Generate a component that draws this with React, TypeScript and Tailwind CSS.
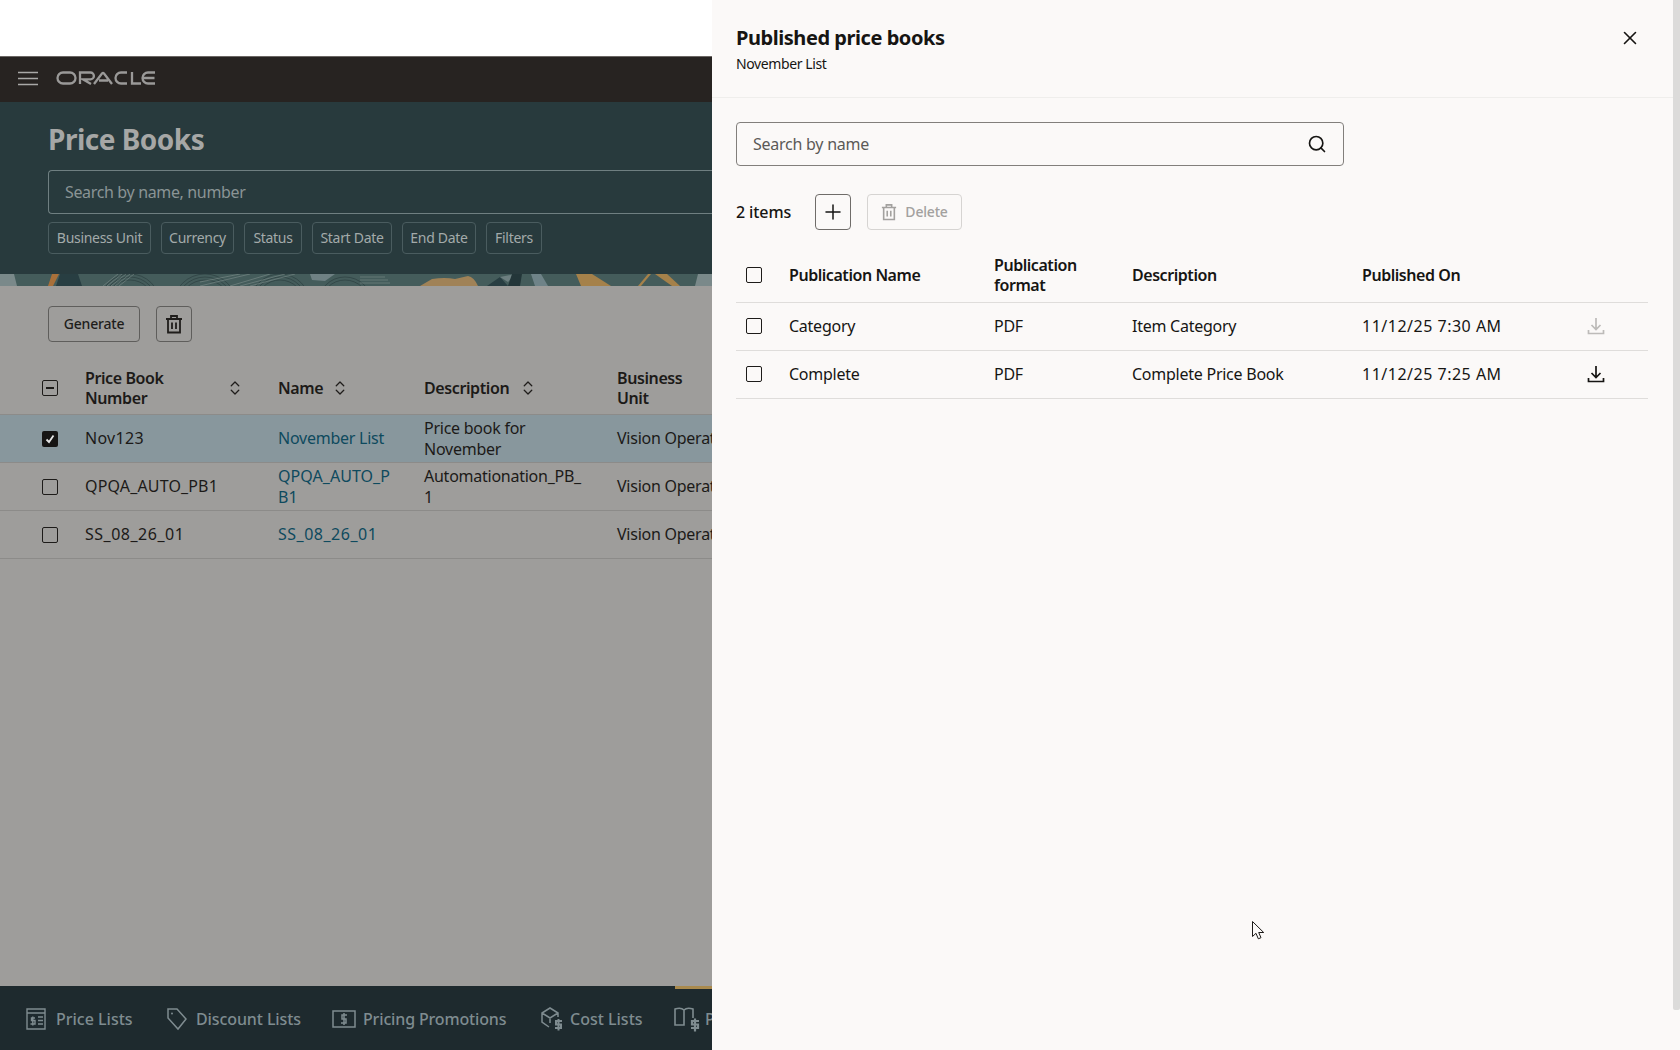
import { ChevronsUpDown, Plus, Search, X } from 'lucide-react';

const filters = [
  { label: 'Business Unit', width: 'w-[103px]' },
  { label: 'Currency', width: 'w-[73px]' },
  { label: 'Status', width: 'w-[58px]' },
  { label: 'Start Date', width: 'w-[80px]' },
  { label: 'End Date', width: 'w-[74px]' },
  { label: 'Filters', width: 'w-[56px]' },
];

const publications = [
  { name: 'Category', format: 'PDF', description: 'Item Category', published: '11/12/25 7:30 AM', enabled: false },
  { name: 'Complete', format: 'PDF', description: 'Complete Price Book', published: '11/12/25 7:25 AM', enabled: true },
];

function TrashIcon({ className }: { className?: string }) {
  return (
    <svg viewBox="0 0 18 20" className={className} fill="none" stroke="currentColor" strokeWidth="1.8">
      <path d="M1 5h16M6 5V2h6v3M3 5v13.500h12V5M7 8.500v6.500M11 8.500v6.500" />
    </svg>
  );
}

function DownloadIcon({ className }: { className?: string }) {
  return (
    <svg viewBox="0 0 18 18" className={className} fill="none" stroke="currentColor" strokeWidth="1.7">
      <path d="M9 1v11M4.500 8 9 12.500 13.500 8M1.500 13v3.500h15V13" />
    </svg>
  );
}

function Checkbox({ className = 'border-[#1d1b19]' }: { className?: string }) {
  return <span className={`block h-4 w-4 rounded-[2px] border-[1.5px] ${className}`} />;
}

function SortIcon() {
  return <ChevronsUpDown className="h-[18px] w-[18px] text-[#1f1d1b]" strokeWidth={1.75} />;
}

function PatternStrip() {
  return (
    <svg viewBox="0 0 712 12" preserveAspectRatio="none" className="block h-3 w-full">
      <rect width="712" height="12" fill="#445c5b" />
      <g fill="none" stroke="#2c3f40" strokeWidth="0.7">
        <circle cx="130" cy="30" r="30" />
        <circle cx="130" cy="30" r="27" />
        <circle cx="130" cy="30" r="24" />
        <circle cx="205" cy="32" r="32" />
        <circle cx="205" cy="32" r="29" />
        <circle cx="205" cy="32" r="26" />
        <circle cx="280" cy="30" r="30" />
        <circle cx="280" cy="30" r="27" />
        <circle cx="280" cy="30" r="24" />
        <circle cx="345" cy="30" r="27" />
        <circle cx="345" cy="30" r="24" />
      </g>
      <g fill="none" stroke="#7d8d8c" strokeWidth="0.6">
        <path d="M103 12 118 0M107 12 122 0M111 12 126 0M115 12 130 0M119 12 134 0" />
        <path d="M200 8 240 0M200 12 250 0M230 12 270 0M240 12 285 0M250 12 295 0" />
        <path d="M360 3h25M360 6h28M360 9h30" />
      </g>
      <polygon points="0,0 14,0 17,12 0,12" fill="#7a898a" />
      <polygon points="52,0 59,0 53,12 48,12" fill="#a8703a" />
      <polygon points="60,0 78,0 82,12 56,12" fill="#283e42" />
      <polygon points="310,0 335,0 325,7 312,6" fill="#6f8184" />
      <path d="M420 12 432 5Q445 3 455 5L468 2Q474 3 478 12Z" fill="#a08257" />
      <polygon points="487,12 500,3 508,12" fill="#283e42" />
      <polygon points="500,3 515,0 508,8" fill="#6d7f80" />
      <polygon points="512,0 522,0 520,12 508,12" fill="#233639" />
      <polygon points="531,0 541,0 548,12 535,12" fill="#6f8388" />
      <polygon points="576,0 592,0 611,12 581,12" fill="#a5814a" />
      <polygon points="648,0 651,0 641,12 638,12" fill="#a5814a" />
      <polygon points="655,0 667,0 680,12 672,12" fill="#a5814a" />
      <polygon points="698,0 712,0 712,12 695,12" fill="#7a898a" />
    </svg>
  );
}

function PriceListIcon() {
  return (
    <svg viewBox="0 0 20 22" className="h-[22px] w-5" fill="none" stroke="currentColor" strokeWidth="1.4">
      <path d="M1 1h18v20H1zM1 5h18" />
      <path d="M12 9h5M12 12.500h5M12 16h5" />
      <path d="M9 10H5.500v2.500H9V16H4.500M6.800 8.500v9" />
    </svg>
  );
}

function TagIcon() {
  return (
    <svg viewBox="0 0 22 24" className="h-6 w-[22px] shrink-0" fill="none" stroke="currentColor" strokeWidth="1.5">
      <path d="M2 2h9l9 10-8 10-10-11z" />
      <circle cx="6" cy="6.500" r="1" fill="currentColor" stroke="none" />
    </svg>
  );
}

function PromotionIcon() {
  return (
    <svg viewBox="0 0 24 20" className="h-5 w-6 shrink-0" fill="none" stroke="currentColor" strokeWidth="1.5">
      <path d="M1 2h22v16H1z" />
      <path d="M15 6h-5v4h4v4H9M12 4v12" />
    </svg>
  );
}

function CostIcon() {
  return (
    <svg viewBox="0 0 24 26" className="h-[26px] w-6 shrink-0" fill="none" stroke="currentColor" strokeWidth="1.5">
      <path d="M19 11V7l-8-5-8 5v9l7 5M3 7l8 5 8-5M11 12v5" />
      <path d="M23 15h-6v3.500h5V22h-6M19.500 13v11.500" strokeWidth="2" />
    </svg>
  );
}

function BookIcon() {
  return (
    <svg viewBox="0 0 26 26" className="h-[26px] w-[26px] shrink-0" fill="none" stroke="currentColor" strokeWidth="1.6">
      <path d="M10 4C8 2 4 2 1 3v16h9V4zM10 4c2-2 6-2 9-1v9M10 4v15" />
      <path d="M25 15h-7v3.500h6V22h-7M21 12.500v13" strokeWidth="2.200" />
    </svg>
  );
}

function ArrowCursor() {
  return (
    <svg viewBox="0 0 13 20" className="absolute left-[1252px] top-[921px] h-5 w-[13px]" fill="#fbf9f8" stroke="#1c1a18" strokeWidth="1">
      <path d="M.5.5v15l3.500-3.200 2.300 5.500 2.700-1.100-2.300-5.200h5z" />
    </svg>
  );
}

function MainColumn() {
  return (
    <div className="flex w-[712px] shrink-0 flex-col overflow-hidden">
      <div className="h-14 shrink-0 bg-white" />
      <header className="flex h-[46px] shrink-0 items-center border-t border-[#6b6764] bg-[#272321] pb-[3px] pl-[18px]">
        <svg viewBox="0 0 20 15" className="h-[15px] w-5" stroke="#a9a8a7" strokeWidth="1.6">
          <path d="M0 1.500h20M0 7.500h20M0 13.500h20" />
        </svg>
        {/* the wordmark is a logo */}
        <svg viewBox="0 0 100 14" className="ml-[17px] h-[14px] w-[100px]" fill="none" stroke="#9a9998" strokeWidth="2.300">
          <path d="M8 1.500h7a5.500 5.500 0 0 1 0 11H8a5.500 5.500 0 0 1 0-11z" />
          <path d="M25 13V1.500h10.500a3.300 3.300 0 0 1 0 6.800H28l8 4.700" />
          <path d="M39 13 47 2.500q1-1.200 2 0L57 13M44 9.500h9" />
          <path d="M72 1.500h-6a5.500 5.500 0 0 0 0 11h6" />
          <path d="M77 1v11.500h9" />
          <path d="M100 1.500h-7a5.500 5.500 0 0 0 0 11h7M88.500 7h11" />
        </svg>
      </header>

      <section className="h-[172px] shrink-0 bg-[#283a3d] pl-12 pt-[19px]">
        <h1 className="text-[28px] leading-9 font-bold tracking-[-0.5px] text-[#a6a7a6]">Price Books</h1>
        <div className="mt-[13px] flex h-11 items-center rounded-l-[4px] border border-r-0 border-[#6f7f81] pl-4 text-base tracking-[-0.35px] text-[#8a9495]">
          Search by name, number
        </div>
        <div className="mt-2 flex gap-2.5">
          {filters.map((f) => (
            <span
              key={f.label}
              className={`flex h-8 items-center justify-center rounded-[4px] border border-[#4a5c5f] text-sm tracking-[-0.3px] text-[#a3aaaa] ${f.width}`}
            >
              {f.label}
            </span>
          ))}
        </div>
      </section>
      <PatternStrip />

      <main className="flex-1 bg-[#9e9d9b]">
        <div className="flex h-14 items-end gap-4 pl-12">
          <button className="h-9 w-[92px] rounded-[4px] border border-[#5f5e5c] text-sm font-medium tracking-[-0.2px] text-[#1f1d1b]">Generate</button>
          <button className="flex h-9 w-9 items-center justify-center rounded-[4px] border border-[#5f5e5c] text-[#1f1d1b]">
            <TrashIcon className="h-[20px] w-[18px]" />
          </button>
        </div>

        <div className="mt-2 grid h-[65px] grid-cols-[85px_193px_146px_193px_95px] items-center border-b border-[#8c8b89] pt-[11px] text-base leading-5 font-semibold tracking-[-0.4px] text-[#1c1a18]">
          <span className="flex justify-center pl-[14px]">
            <span className="flex h-4 w-4 items-center justify-center rounded-[2px] border-[1.5px] border-[#1d1b19]">
              <span className="h-[2px] w-2 bg-[#1d1b19]" />
            </span>
          </span>
          <span className="flex items-center">
            <span className="w-[141px]">Price Book<br />Number</span>
            <SortIcon />
          </span>
          <span className="flex items-center gap-2">Name <SortIcon /></span>
          <span className="flex items-center gap-2.5">Description <SortIcon /></span>
          <span>Business<br />Unit</span>
        </div>

        <PriceBookRow selected number={<span className="tracking-[0.3px]">Nov123</span>} name={<>November List</>} description={<>Price book for<br />November</>} />
        <PriceBookRow
          number={<span className="tracking-[0.15px]">QPQA_AUTO_PB1</span>}
          name={<span className="tracking-[0.05px]">QPQA_AUTO_P<br />B1</span>}
          description={<>Automationation_PB_<br />1</>}
        />
        <PriceBookRow
          number={<span className="tracking-[0.5px]">SS_08_26_01</span>}
          name={<span className="tracking-[0.5px]">SS_08_26_01</span>}
        />
      </main>

      <footer className="relative flex h-16 shrink-0 items-center bg-[#1e2a2e] pt-[1px] pl-[26px] text-base font-medium text-[#7f8c90]">
        <span className="absolute top-0 right-0 h-[3px] w-[37px] bg-[#a98a4e]" />
        <span className="flex w-[140px] shrink-0 items-center gap-[10px]"><PriceListIcon /><span>Price Lists</span></span>
        <span className="flex w-[166px] shrink-0 items-center gap-2"><TagIcon /><span className="tracking-[-0.1px]">Discount Lists</span></span>
        <span className="flex w-[207px] shrink-0 items-center gap-[7px]"><PromotionIcon /><span className="tracking-[-0.15px]">Pricing Promotions</span></span>
        <span className="flex w-[135px] shrink-0 items-center gap-[7px]"><CostIcon /><span>Cost Lists</span></span>
        <span className="flex shrink-0 items-center gap-[5px]"><BookIcon /><span>Pricing</span></span>
      </footer>
    </div>
  );
}

function PriceBookRow({
  selected,
  number,
  name,
  description,
}: {
  selected?: boolean;
  number: React.ReactNode;
  name: React.ReactNode;
  description?: React.ReactNode;
}) {
  return (
    <div
      className={`grid h-12 grid-cols-[85px_193px_146px_193px_95px] items-center border-b border-[#8c8b89] text-base leading-[21px] tracking-[-0.25px] text-[#1c1a18] ${
        selected ? 'bg-[#88979d]' : ''
      }`}
    >
      <span className="flex justify-center pl-[14px]">
        {selected ? (
          <span className="flex h-4 w-4 items-center justify-center rounded-[2px] bg-[#161514]">
            <svg viewBox="0 0 12 12" className="h-3 w-3" fill="none" stroke="#e5e5e5" strokeWidth="1.8">
              <path d="M2.500 6.500 5 9l4.500-6.500" />
            </svg>
          </span>
        ) : (
          <Checkbox />
        )}
      </span>
      <span>{number}</span>
      <span className="text-[#0e4a5e]">{name}</span>
      <span>{description}</span>
      <span className="whitespace-nowrap">Vision Operations</span>
    </div>
  );
}

function PublishedPanel() {
  return (
    <aside className="relative flex-1 bg-[#fbf9f8] text-[#161513]">
      <div className="flex h-[98px] items-start justify-between border-b border-[#efeeec] pt-[23px] pr-[39px] pl-6">
        <div>
          <h2 className="text-xl leading-[30px] font-bold tracking-[-0.45px]">Published price books</h2>
          <p className="mt-[1px] text-sm leading-5 tracking-[-0.4px]">November List</p>
        </div>
        <X className="mt-1 h-[22px] w-[22px]" strokeWidth={1.75} />
      </div>

      <div className="pt-6 pl-6">
        <div className="flex h-11 w-[608px] items-center justify-between rounded-[4px] border border-[#827f7c] pr-4 pb-[1px] pl-4 text-base tracking-[-0.25px] text-[#5b5957]">
          Search by name
          <Search className="h-5 w-5 text-[#161513]" strokeWidth={2} />
        </div>

        <div className="mt-7 flex items-center">
          <span className="w-[79px] pb-[1px] text-base font-medium tracking-[-0.1px]">2 items</span>
          <button className="flex h-9 w-9 items-center justify-center rounded-[4px] border border-[#6f6c69]">
            <Plus className="h-6 w-6" strokeWidth={1.5} />
          </button>
          <button className="ml-4 flex h-9 w-[95px] items-center justify-center gap-2 rounded-[4px] border border-[#d6d4d2] text-sm font-medium tracking-[-0.2px] text-[#a3a19f]">
            <TrashIcon className="h-[18px] w-4" />
            Delete
          </button>
        </div>

        <div className="mt-2 w-[912px]">
          <div className="grid h-[65px] grid-cols-[53px_205px_138px_230px_1fr] items-center border-b border-[#dfdddb] pt-[10px] text-base leading-5 font-semibold tracking-[-0.45px]">
            <span className="pl-[10px]"><Checkbox /></span>
            <span>Publication Name</span>
            <span>Publication<br />format</span>
            <span>Description</span>
            <span>Published On</span>
          </div>
          {publications.map((p) => (
            <div key={p.name} className="grid h-12 grid-cols-[53px_205px_138px_230px_225px_1fr] items-center border-b border-[#dfdddb] pb-[2px] text-base tracking-[-0.25px]">
              <span className="pl-[10px]"><Checkbox /></span>
              <span>{p.name}</span>
              <span>{p.format}</span>
              <span>{p.description}</span>
              <span className="tracking-[0.5px]">{p.published}</span>
              <DownloadIcon className={`h-[18px] w-[18px] ${p.enabled ? 'text-[#161513]' : 'text-[#bdbbb9]'}`} />
            </div>
          ))}
        </div>
      </div>

      <div className="absolute top-0 right-0 h-[1010px] w-[7px] rounded-b-[2px] bg-[#dcdbda]" />
    </aside>
  );
}

export default function App() {
  return (
    <div className="relative flex h-screen overflow-hidden font-['Noto_Sans',sans-serif]">
      <MainColumn />
      <PublishedPanel />
      <ArrowCursor />
    </div>
  );
}
